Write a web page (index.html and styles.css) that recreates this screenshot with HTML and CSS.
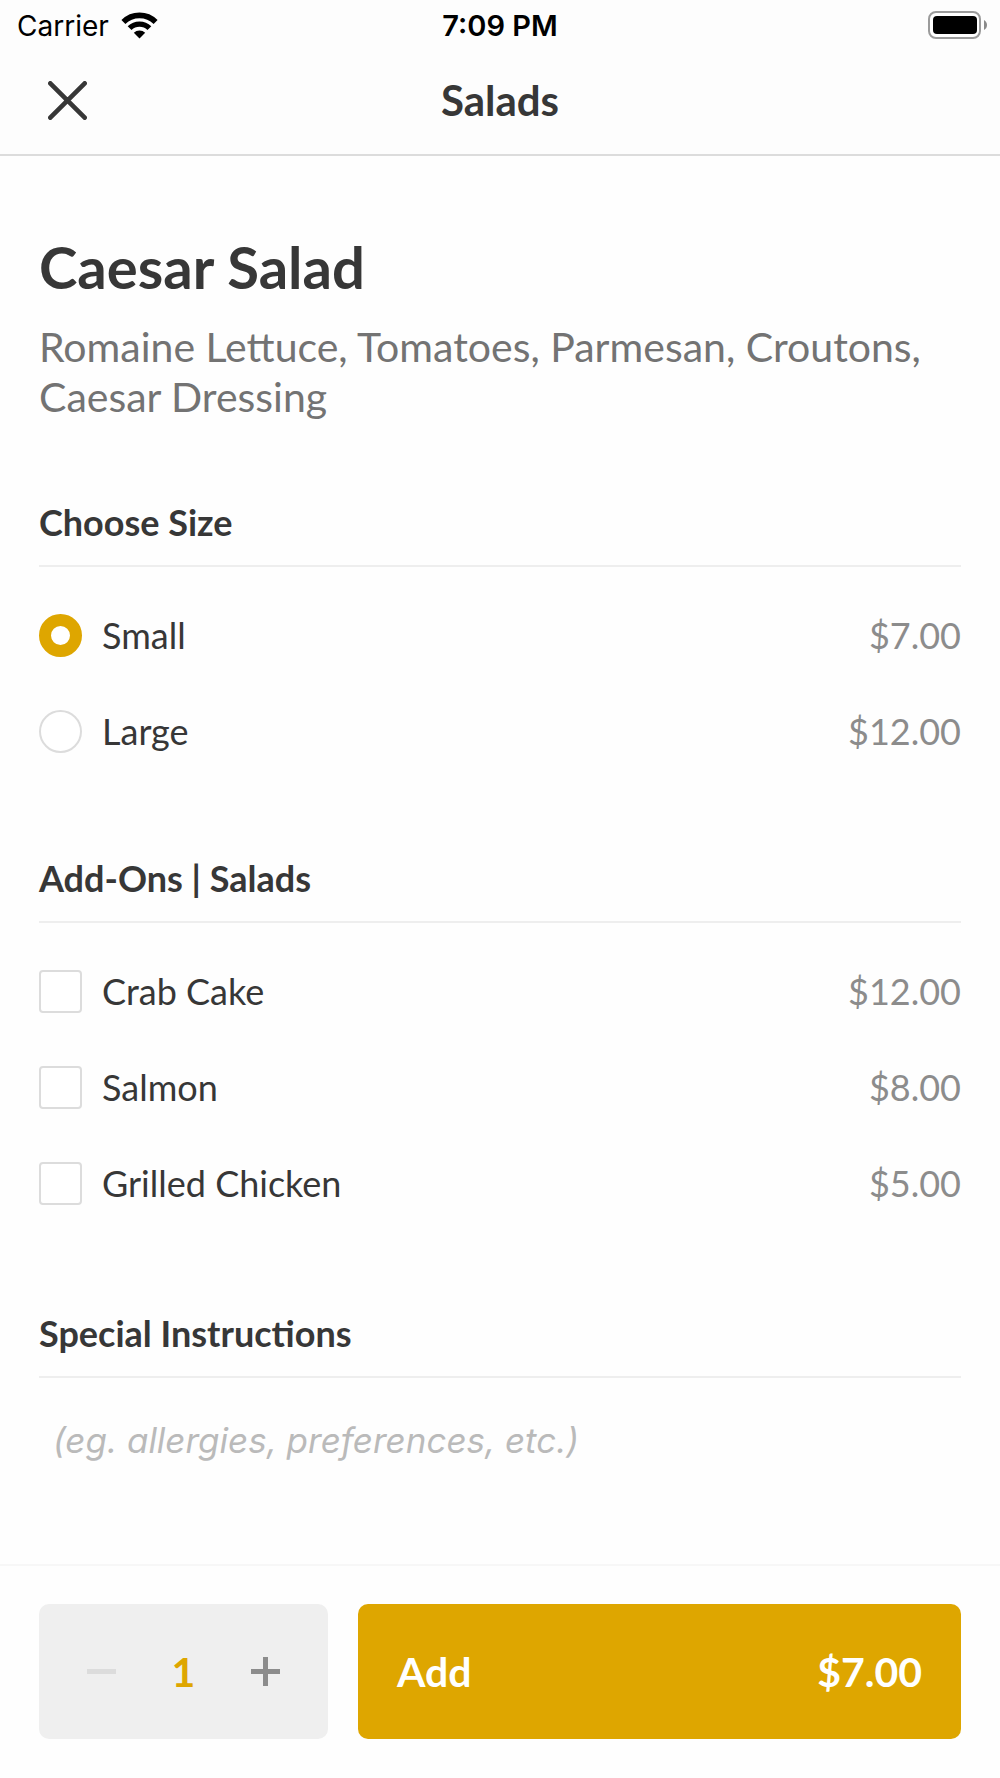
FILE: index.html
```html
<!DOCTYPE html>
<html lang="en">
<head>
  <meta charset="utf-8">
  <meta name="viewport" content="width=device-width, initial-scale=1">
  <title>Caesar Salad</title>
  <link rel="stylesheet" href="styles.css">
</head>
<body>
  <header class="header">
    <div class="status">
      <div class="status-carrier">
        <span>Carrier</span>
        <svg class="status-icon" width="37" height="28" viewBox="0 0 37 28" aria-hidden="true">
          <path d="M2.4 11 A22.8 22.8 0 0 1 34.6 11" fill="none" stroke="#000" stroke-width="5.6"/>
          <path d="M8.6 17.2 A14 14 0 0 1 28.4 17.2" fill="none" stroke="#000" stroke-width="5.4"/>
          <path d="M18.500 27.500 L12.800 21.800 A8.100 8.100 0 0 1 24.200 21.800 Z" fill="#000"/>
        </svg>
      </div>
      <span class="status-time">7:09 PM</span>
      <svg class="status-icon status-battery" width="59" height="28" viewBox="0 0 59 28" aria-hidden="true">
        <rect x="1" y="1" width="51" height="26" rx="7" fill="#fff" stroke="#9b9b9b" stroke-width="2"/>
        <rect x="5" y="5" width="44" height="18" rx="4" fill="#000"/>
        <path d="M56 9 C60 11 60 17 56 19 Z" fill="#8a8a8a"/>
      </svg>
    </div>
    <div class="nav">
      <button class="close" type="button" aria-label="Close">
        <svg width="39" height="39" viewBox="0 0 39 39" aria-hidden="true">
          <path d="M2.300 2.300 L36.700 36.700 M36.700 2.300 L2.300 36.700" stroke="#373737" stroke-width="4.600" stroke-linecap="round"/>
        </svg>
      </button>
      <p class="nav-title">Salads</p>
    </div>
  </header>

  <main class="content">
    <h1 class="title">Caesar Salad</h1>
    <p class="description">Romaine Lettuce, Tomatoes, Parmesan, Croutons, Caesar Dressing</p>

    <section class="group group-first">
      <h2 class="group-title">Choose Size</h2>
      <div class="options">
        <label class="option"><input class="radio" type="radio" name="size" checked><span class="option-name">Small</span><span class="option-price">$7.00</span></label>
        <label class="option"><input class="radio" type="radio" name="size"><span class="option-name">Large</span><span class="option-price">$12.00</span></label>
      </div>
    </section>

    <section class="group">
      <h2 class="group-title">Add-Ons | Salads</h2>
      <div class="options">
        <label class="option"><input class="checkbox" type="checkbox"><span class="option-name">Crab Cake</span><span class="option-price">$12.00</span></label>
        <label class="option"><input class="checkbox" type="checkbox"><span class="option-name">Salmon</span><span class="option-price">$8.00</span></label>
        <label class="option"><input class="checkbox" type="checkbox"><span class="option-name">Grilled Chicken</span><span class="option-price">$5.00</span></label>
      </div>
    </section>

    <section class="group group-notes">
      <h2 class="group-title"><label for="notes">Special Instructions</label></h2>
      <textarea class="notes" id="notes" rows="2" placeholder="(eg. allergies, preferences, etc.)"></textarea>
    </section>
  </main>

  <footer class="footer">
    <div class="stepper">
      <button class="step" type="button" aria-label="Decrease quantity" disabled>
        <svg width="29" height="29" viewBox="0 0 29 29" aria-hidden="true"><path d="M0 14.500 H29" stroke="currentColor" stroke-width="5"/></svg>
      </button>
      <output class="quantity">1</output>
      <button class="step" type="button" aria-label="Increase quantity">
        <svg width="29" height="29" viewBox="0 0 29 29" aria-hidden="true"><path d="M0 14.500 H29 M14.500 0 V29" stroke="currentColor" stroke-width="5"/></svg>
      </button>
    </div>
    <button class="add" type="button"><span>Add</span><span>$7.00</span></button>
  </footer>
</body>
</html>
```

FILE: styles.css
```css
* {
  box-sizing: border-box;
}

body {
  margin: 0;
  min-height: 100vh;
  display: flex;
  flex-direction: column;
  background: #fefefe;
  color: #373737;
  font-family: Lato, "Liberation Sans", sans-serif;
  font-size: 36px;
  line-height: 44px;
}

h1,
h2,
p {
  margin: 0;
}

button {
  padding: 0;
  border: 0;
  background: none;
  color: inherit;
  font: inherit;
}

svg {
  display: block;
}

.header {
  background: #fdfdfd;
  border-bottom: 2px solid #dcdcdc;
}

.status {
  display: grid;
  grid-template-columns: 1fr auto 1fr;
  align-items: center;
  height: 52px;
  padding: 0 13px;
  color: #000;
  font-family: Inter, "Liberation Sans", sans-serif;
  font-size: 28px;
  line-height: 34px;
}

.status-carrier {
  display: flex;
  align-items: center;
  gap: 12px;
  padding-left: 4px;
}

.status-time {
  font-size: 29px;
  font-weight: 600;
}

.status-icon {
  margin-bottom: 2px;
}

.status-battery {
  justify-self: end;
}

.nav {
  display: grid;
  grid-template-columns: 1fr auto 1fr;
  align-items: center;
  height: 102px;
  padding: 0 48px 6px;
}

.close {
  justify-self: start;
}

.nav-title {
  font-size: 42px;
  font-weight: 700;
  line-height: 50px;
}

.content {
  flex: 1;
  padding: 76px 39px 0;
}

.title {
  font-size: 58px;
  font-weight: 700;
  line-height: 70px;
}

.description {
  margin-top: 20px;
  color: #737373;
  font-size: 41px;
  line-height: 50px;
}

.group {
  margin-top: 77px;
}

.group-first {
  margin-top: 78px;
}

.group-notes {
  margin-top: 80px;
}

.group-title {
  padding-bottom: 21px;
  border-bottom: 2px solid #eeeeee;
  font-size: 36px;
  font-weight: 700;
  line-height: 44px;
}

.options {
  padding-top: 20px;
}

.option {
  display: flex;
  align-items: center;
  gap: 20px;
  height: 96px;
}

.option-name {
  flex: 1;
}

.option-price {
  color: #8c8c8c;
}

.radio,
.checkbox {
  appearance: none;
  flex: none;
  width: 43px;
  height: 43px;
  margin: 0;
  border: 2px solid #dcdcdc;
  background: #fff;
}

.radio {
  border-radius: 50%;
}

.radio:checked {
  border: 12px solid #dea600;
}

.checkbox {
  border-radius: 4px;
}

.checkbox:checked {
  background: #dea600;
}

.notes {
  display: block;
  width: 100%;
  margin-top: 40px;
  padding: 0 14px;
  border: 0;
  outline: 0;
  resize: none;
  background: transparent;
  color: inherit;
  font-family: Inter, "Liberation Sans", sans-serif;
  font-size: 35px;
  line-height: 44px;
}

.notes::placeholder {
  color: #bababa;
  font-style: italic;
}

.footer {
  display: grid;
  grid-template-columns: 289fr 603fr;
  gap: 30px;
  padding: 38px 39px 39px;
  border-top: 2px solid #f7f7f7;
  font-size: 41px;
  font-weight: 700;
  line-height: 48px;
}

.stepper,
.add {
  display: flex;
  align-items: center;
  justify-content: space-between;
  height: 135px;
  border-radius: 10px;
}

.stepper {
  padding: 0 48px;
  background: #efefef;
}

.step {
  color: #8c8c8c;
}

.step:disabled {
  color: #dcdcdc;
}

.quantity {
  color: #dea600;
}

.add {
  padding: 0 39px;
  background: #dea600;
  color: #fff;
}
```
